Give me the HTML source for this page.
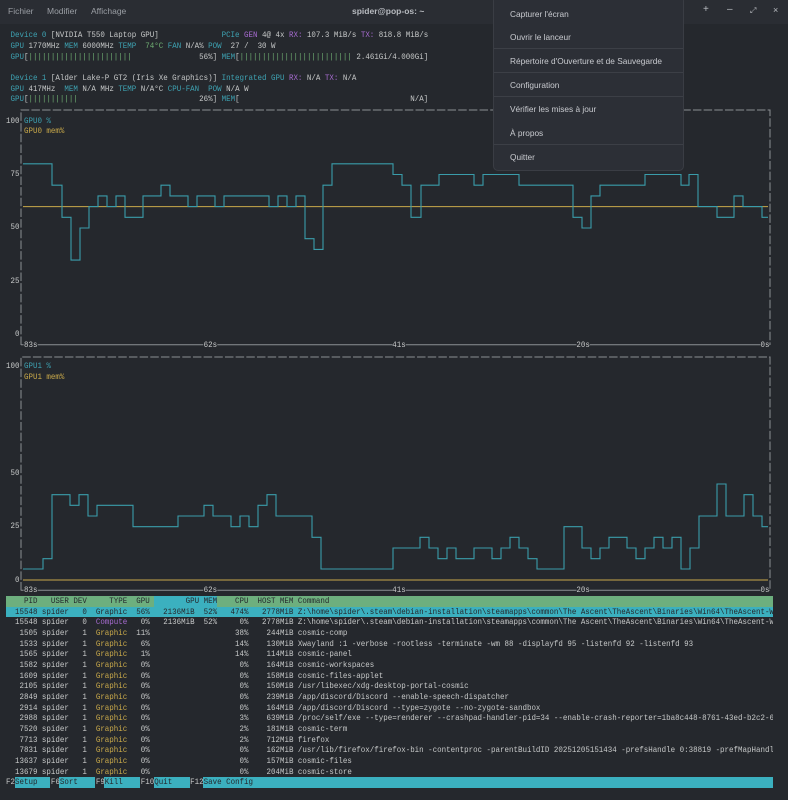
<!DOCTYPE html>
<html><head><meta charset="utf-8"><style>
*{margin:0;padding:0;box-sizing:border-box}
body{width:788px;height:800px;background:#25282d;overflow:hidden;position:relative;font-family:"Liberation Sans",sans-serif}
#tb{position:absolute;left:0;top:0;width:788px;height:24px;background:#2a2d33}
.mi{position:absolute;top:6px;font-size:8.5px;color:#9a9ea4}
#title{position:absolute;top:6px;left:352px;font-size:8.5px;color:#b8bbc0;font-weight:bold}
.wb{position:absolute;top:4px;font-size:10px;color:#b8bbc0}
#clip{position:absolute;left:5.5px;top:30.4px;width:767.5px;height:760px;overflow:hidden}
pre{position:absolute;left:0;top:0;width:872px;transform:scaleX(0.8804);transform-origin:0 0;font-family:"Liberation Mono","DejaVu Sans Mono",monospace;font-size:8.5px;line-height:10.67px;color:#c6c8c8;white-space:pre}
.t{color:#3ea2b2}.p{color:#a66bd0}.g{color:#6fae72}.y{color:#c9a94a}.k{color:#25282d}.b{background:#25282d}
.bar{position:absolute;height:10.67px}
#menu{position:absolute;left:493px;top:-4px;width:191px;height:175px;background:#2c2f36;border:1px solid #3a3d44;border-radius:5px;font-size:8.3px;color:#c9cbd0}
#menu div.i{position:absolute;left:16px}
#menu div.s{position:absolute;left:0;width:189px;height:1px;background:#3c3f46}
</style></head><body>
<div id="tb">
<span class="mi" style="left:8px">Fichier</span>
<span class="mi" style="left:47px">Modifier</span>
<span class="mi" style="left:91px">Affichage</span>
<span id="title">spider@pop-os: ~</span>
<span class="wb" style="left:703px">+</span>
<span class="wb" style="left:727px">–</span>
<span class="wb" style="left:750px;font-size:8px;top:6px">⤢</span>
<span class="wb" style="left:773px;font-size:9px;top:5px">×</span>
</div>

<div class="bar" style="left:5.5px;top:595.9px;width:767.5px;background:#6daf7e"></div>
<div class="bar" style="left:153.7px;top:595.9px;width:62.9px;background:#3bb0bf"></div>
<div class="bar" style="left:5.5px;top:606.6px;width:767.5px;background:#3bb0bf"></div>
<div class="bar" style="left:14.5px;top:777.3px;width:35.9px;background:#3bb0bf"></div>
<div class="bar" style="left:59.4px;top:777.3px;width:35.9px;background:#3bb0bf"></div>
<div class="bar" style="left:104.3px;top:777.3px;width:35.9px;background:#3bb0bf"></div>
<div class="bar" style="left:153.7px;top:777.3px;width:35.9px;background:#3bb0bf"></div>
<div class="bar" style="left:203.1px;top:777.3px;width:569.9px;background:#3bb0bf"></div>

<svg width="788" height="800" style="position:absolute;left:0;top:0" fill="none">
<g stroke="#8c8f94" stroke-width="1">
<path d="M21 345V110H770V345" stroke-dasharray="8.5 2.17"/>
<path d="M21 344.7H770"/>
<path d="M21 590.5V357H770V590.5" stroke-dasharray="8.5 2.17"/>
<path d="M21 590.3H770"/>
</g>
<path d="M23 206.6H768M23 580H768" stroke="#c9a94a" stroke-width="1"/>
<g stroke="#3a9caa" stroke-width="1.1">
<path d="M23 163.8H52V185.2H62V217.3H71V260.1H80V228H89V206.6H98V195.9H107V206.6H116V195.9H125V217.3H143V195.9H161V185.2H170V195.9H188V206.6H197V195.9H215V206.6H224V195.9H269V206.6H278V195.9H287V206.6H296V195.9H305V238.7H314V249.4H323V185.2H332V163.8H393V174.5H402V185.2H411V217.3H421V185.2H439V174.5H474V185.2H483V174.5H519V185.2H573V217.3H582V228H591V195.9H600V185.2H645V174.5H681V185.2H689V174.5H698V206.6H717V217.3H734V195.9H743V206.6H762V217.3H768"/>
<path d="M23 569H43V558.7H52V494.7H70V505.3H79V494.7H88V516H97V505.3H133V526.7H178V516H204V505.3H213V516H231V526.7H240V516H249V526.7H258V505.3H267V494.7H276V516H312V537.3H321V569H393V548H420V537.3H429V548H438V558.7H447V548H456V558.7H474V548H492V558.7H501V548H510V537.3H519V548H528V558.7H537V569H564V526.7H582V548H591V558.7H600V548H609V537.3H627V548H636V558.7H645V548H654V537.3H663V548H672V537.3H681V569H690V548H699V516H717V484H726V516H744V494.7H753V516H762V526.7H768"/>
</g>
</svg>

<div id="clip"><pre> <span class="t">Device 0</span> [NVIDIA T550 Laptop GPU]              <span class="t">PCIe</span> <span class="p">GEN</span> 4@ 4x <span class="p">RX:</span> 107.3 MiB/s <span class="p">TX:</span> 818.8 MiB/s
 <span class="t">GPU</span> 1770MHz <span class="t">MEM</span> 6000MHz <span class="t">TEMP</span>  <span class="g">74°C</span> <span class="t">FAN</span> N/A% <span class="t">POW</span>  27 /  30 W
 <span class="t">GPU</span>[<span class="g">|||||||||||||||||||||||</span>               56%] <span class="t">MEM</span>[<span class="g">|||||||||||||||||||||||||</span> 2.461Gi/4.000Gi]

 <span class="t">Device 1</span> [Alder Lake-P GT2 (Iris Xe Graphics)] <span class="t">Integrated GPU</span> <span class="p">RX:</span> N/A <span class="p">TX:</span> N/A
 <span class="t">GPU</span> 417MHz  <span class="t">MEM</span> N/A MHz <span class="t">TEMP</span> N/A°C <span class="t">CPU-FAN</span>  <span class="t">POW</span> N/A W
 <span class="t">GPU</span>[<span class="g">|||||||||||</span>                           26%] <span class="t">MEM</span>[                                      N/A]

100 <span class="t">GPU0 %</span>
    <span class="y">GPU0 mem%</span>



 75




 50




 25




  0
    <span class="b">83s</span>                                     <span class="b">62s</span>                                       <span class="b">41s</span>                                      <span class="b">20s</span>                                      <span class="b">0s</span>

100 <span class="t">GPU1 %</span>
    <span class="y">GPU1 mem%</span>








 50




 25




  0
    <span class="b">83s</span>                                     <span class="b">62s</span>                                       <span class="b">41s</span>                                      <span class="b">20s</span>                                      <span class="b">0s</span>
<span class="k">    PID   USER DEV     TYPE  GPU        GPU MEM    CPU  HOST MEM Command</span>
<span class="k">  15548 spider   0  Graphic  56%   2136MiB  52%   474%   2778MiB Z:\home\spider\.steam\debian-installation\steamapps\common\The Ascent\TheAscent\Binaries\Win64\TheAscent-Win64-Shipping.exe</span>
  15548 spider   0  <span class="p">Compute</span>   0%   2136MiB  52%     0%   2778MiB Z:\home\spider\.steam\debian-installation\steamapps\common\The Ascent\TheAscent\Binaries\Win64\TheAscent-Win64-Shipping.exe
   1505 spider   1  <span class="y">Graphic</span>  11%                   38%    244MiB cosmic-comp
   1533 spider   1  <span class="y">Graphic</span>   6%                   14%    130MiB Xwayland :1 -verbose -rootless -terminate -wm 88 -displayfd 95 -listenfd 92 -listenfd 93
   1565 spider   1  <span class="y">Graphic</span>   1%                   14%    114MiB cosmic-panel
   1582 spider   1  <span class="y">Graphic</span>   0%                    0%    164MiB cosmic-workspaces
   1609 spider   1  <span class="y">Graphic</span>   0%                    0%    158MiB cosmic-files-applet
   2105 spider   1  <span class="y">Graphic</span>   0%                    0%    150MiB /usr/libexec/xdg-desktop-portal-cosmic
   2849 spider   1  <span class="y">Graphic</span>   0%                    0%    239MiB /app/discord/Discord --enable-speech-dispatcher
   2914 spider   1  <span class="y">Graphic</span>   0%                    0%    164MiB /app/discord/Discord --type=zygote --no-zygote-sandbox
   2988 spider   1  <span class="y">Graphic</span>   0%                    3%    639MiB /proc/self/exe --type=renderer --crashpad-handler-pid=34 --enable-crash-reporter=1ba8c448-8761-43ed-b2c2-6
   7520 spider   1  <span class="y">Graphic</span>   0%                    2%    181MiB cosmic-term
   7713 spider   1  <span class="y">Graphic</span>   0%                    2%    712MiB firefox
   7831 spider   1  <span class="y">Graphic</span>   0%                    0%    162MiB /usr/lib/firefox/firefox-bin -contentproc -parentBuildID 20251205151434 -prefsHandle 0:38819 -prefMapHandle
  13637 spider   1  <span class="y">Graphic</span>   0%                    0%    157MiB cosmic-files
  13679 spider   1  <span class="y">Graphic</span>   0%                    0%    204MiB cosmic-store
F2<span class="k">Setup   </span>F6<span class="k">Sort    </span>F9<span class="k">Kill    </span>F10<span class="k">Quit    </span>F12<span class="k">Save Config</span></pre></div>

<div id="menu">
<div class="i" style="top:12px">Capturer l'écran</div>
<div class="i" style="top:35px">Ouvrir le lanceur</div>
<div class="s" style="top:51px"></div>
<div class="i" style="top:59px">Répertoire d'Ouverture et de Sauvegarde</div>
<div class="s" style="top:75px"></div>
<div class="i" style="top:83px">Configuration</div>
<div class="s" style="top:99px"></div>
<div class="i" style="top:107px">Vérifier les mises à jour</div>
<div class="i" style="top:131px">À propos</div>
<div class="s" style="top:147px"></div>
<div class="i" style="top:155px">Quitter</div>
</div>
</body></html>
